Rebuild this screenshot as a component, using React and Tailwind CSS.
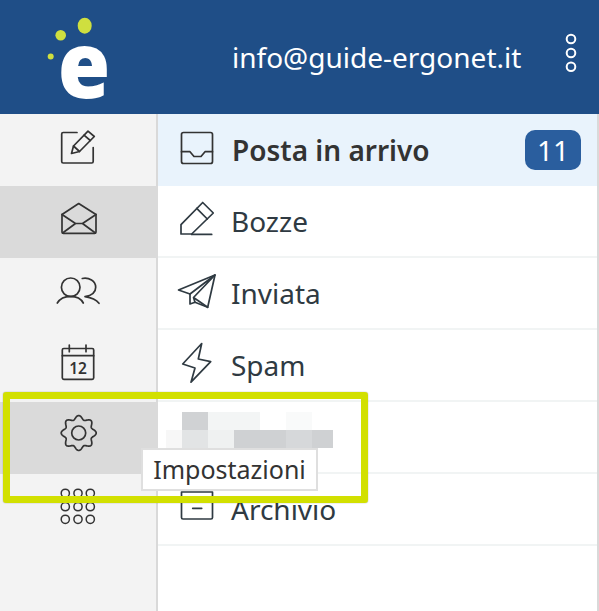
const gearPath = (() => {
  const pts = [];
  for (let i = 0; i < 240; i++) {
    const t = (i / 240) * Math.PI * 2 + Math.PI / 8;
    const r = 15.6 + 1.9 * Math.cos(8 * t);
    pts.push(`${(19.7 + r * Math.cos(t)).toFixed(2)} ${(15 + r * Math.sin(t)).toFixed(2)}`);
  }
  return 'M' + pts.join('L') + 'Z';
})();

const Icon = ({ children, color = '#333' }) => (
  <svg width="40" height="40" viewBox="0 0 40 40" fill="none" stroke={color} strokeWidth="1.7" strokeLinecap="round" strokeLinejoin="round" className="overflow-visible shrink-0">
    {children}
  </svg>
);

const Compose = () => (
  <Icon>
    <path d="M19 2.5H5.2a1.5 1.5 0 0 0-1.5 1.5v27.5a1.5 1.5 0 0 0 1.5 1.5h28.5a1.5 1.5 0 0 0 1.5-1.5V17.5" />
    <path d="M13.5 23.5l2-7.5L30 1.2l6.3 5.3L21.5 21.5z" />
    <path d="M26 5.2l6.3 5.3M15.5 16l6 5.5" />
  </Icon>
);
const MailOpen = () => (
  <Icon>
    <path d="M3 12.5L19.7 1.5L37 12.5V30a1.3 1.3 0 0 1-1.3 1.3H4.3A1.3 1.3 0 0 1 3 30z" />
    <path d="M3 12.5L16.5 21.5H23.5L37 12.5M3.6 31L16.5 21.5M36.4 31L23.5 21.5" />
  </Icon>
);
const Users = () => (
  <Icon>
    <circle cx="12.7" cy="13.3" r="9.3" />
    <path d="M-0.7 29C2 24.5 6 22.3 12.5 22.3S23 24.5 25.3 29" />
    <path d="M24.3 4.5C31 3.2 37.7 7 37.7 13.3C37.7 18 34 21.5 27 22.7C32.5 23.5 38 25.5 41 29.3" />
  </Icon>
);
const Calendar = () => (
  <Icon>
    <rect x="4.3" y="2.5" width="31.4" height="30.8" rx="1.5" />
    <path d="M4.3 9.7H35.7M11.3 -1V5.7M28 -1V5.7" />
    <text x="20" y="27.5" textAnchor="middle" fontFamily="'Noto Sans', sans-serif" fontWeight="600" fontSize="15.5" fill="#333" stroke="none">12</text>
  </Icon>
);
const Gear = () => (
  <Icon>
    <path d={gearPath} />
    <circle cx="19.7" cy="15" r="7" />
  </Icon>
);
const Apps = () => (
  <Icon>
    {[7.3, 20, 32.3].map((x) =>
      [3.3, 16.7, 29.3].map((y) => <circle key={`${x}-${y}`} cx={x} cy={y} r="4.1" strokeWidth="1.5" />)
    )}
  </Icon>
);
const Inbox = () => (
  <Icon>
    <rect x="3.5" y="2.5" width="31" height="31" rx="2" />
    <path d="M3.5 21.7H12L16 26.5H23L27 21.7H34.5" />
  </Icon>
);
const Draft = () => (
  <Icon color="#2f3a42">
    <path d="M13.7 33H3V23.7L24.7 1.5L35.3 12z" />
    <path d="M18.7 7.3L29.3 18M13.7 33.4H33.7" />
  </Icon>
);
const Send = () => (
  <Icon color="#2f3a42">
    <path d="M37 2L0.5 17L12 21V31L17 29.3L29.7 34.3z" />
    <path d="M37 2L12 21M37 2L15.5 24.5L29.7 34.3M15.5 24.5L17 29.3" />
  </Icon>
);
const Bolt = () => (
  <Icon color="#2f3a42">
    <path d="M23.7 -1.5L4.7 19L17 23L13 37.2L32.7 16.7L20.3 14z" />
  </Icon>
);
const Archive = () => (
  <Icon color="#2f3a42">
    <path d="M3.5 3H34.5V28.5a1.5 1.5 0 0 1-1.5 1.5H5a1.5 1.5 0 0 1-1.5-1.5z" />
    <path d="M14.7 19.3H23.7" />
  </Icon>
);

const railItems = [
  { key: 'c', icon: <Compose /> },
  { key: 'm', icon: <MailOpen />, active: true },
  { key: 'u', icon: <Users /> },
  { key: 'k', icon: <Calendar /> },
  { key: 'g', icon: <Gear />, active: true },
  { key: 'a', icon: <Apps /> },
];

const Row = ({ icon, label }) => (
  <div className="h-[72px] flex items-center pl-[20px] border-b-2 border-[#f1f4f4] text-[#2f3a42]">
    {icon}
    <span className="ml-[13px] text-[28px] leading-none">{label}</span>
  </div>
);

const mosaic = [
  ['#ffffff', '#d0d2d4', '#f3f5f5', '#f3f5f5', '#ffffff', '#f9fafa', '#ffffff'],
  ['#f7f7f7', '#e2e4e5', '#eff1f1', '#cfd1d3', '#cfd1d3', '#d6d8da', '#cfd1d3'],
];

export default function App() {
  return (
    <div className="relative w-[599px] h-[611px] overflow-hidden bg-white font-['Noto_Sans',sans-serif]">
      <header className="h-[114px] bg-[#1f4e87] flex items-center">
        <svg width="120" height="114" viewBox="0 0 120 114" className="shrink-0 overflow-visible">
          <ellipse cx="84.7" cy="25.7" rx="7" ry="8" fill="#cfdf3f" />
          <circle cx="60.7" cy="35.3" r="5.3" fill="#cfdf3f" />
          <circle cx="50.7" cy="56.5" r="3" fill="#cfdf3f" />
          <text x="0" y="0" textAnchor="middle" transform="translate(84 98.3) scale(0.93 1)" fontFamily="'Open Sans', sans-serif" fontWeight="800" fontSize="91.5" fill="#fff">e</text>
        </svg>
        <span className="ml-[112px] text-[28px] leading-none text-white -mt-[1px] whitespace-nowrap">info@guide-ergonet.it</span>
        <svg width="16" height="44" viewBox="0 0 16 44" fill="none" stroke="#fff" strokeWidth="2" className="ml-[42px] -mt-[8px] shrink-0">
          <circle cx="8" cy="8" r="4.3" />
          <circle cx="8" cy="22" r="4.3" />
          <circle cx="8" cy="35.7" r="4.3" />
        </svg>
      </header>
      <div className="flex h-[497px]">
        <nav className="w-[158px] shrink-0 bg-[#f3f3f3] border-r-2 border-[#d9d9d9] flex flex-col">
          {railItems.map((it) => (
            <div key={it.key} className={`h-[72px] flex items-center justify-center shrink-0 ${it.active ? 'bg-[#dadada] w-[158px]' : ''}`}>
              {it.icon}
            </div>
          ))}
        </nav>
        <main className="flex-1 border-r-2 border-[#d9d9d9]">
          <div className="h-[72px] flex items-center pl-[20px] pr-[16px] bg-[#e9f3fc]">
            <Inbox />
            <span className="ml-[14px] text-[28px] leading-none font-semibold text-[#333]">Posta in arrivo</span>
            <span className="ml-auto w-[56px] h-[40px] -mt-[1px] rounded-[10px] bg-[#2a5e9e] text-white text-[28px] leading-none flex items-center justify-center">11</span>
          </div>
          <Row icon={<Draft />} label="Bozze" />
          <Row icon={<Send />} label="Inviata" />
          <Row icon={<Bolt />} label="Spam" />
          <div className="h-[72px] border-b-2 border-[#f1f4f4] pt-[10px] pl-[8px]">
            {mosaic.map((row, r) => (
              <div key={r} className="flex h-[18px]">
                {row.map((c, i) => (
                  <div key={i} className={`h-full ${i === 0 ? 'w-[16px]' : i === 6 ? 'w-[21px]' : 'w-[26px]'}`} style={{ backgroundColor: c }} />
                ))}
              </div>
            ))}
          </div>
          <Row icon={<Archive />} label="Archivio" />
        </main>
      </div>
      <div className="absolute left-[141px] top-[448px] w-[177px] h-[43px] bg-white border-2 border-[#dfdfdf] flex items-center justify-center text-[25px] leading-none text-[#333] z-10">
        Impostazioni
      </div>
      <div className="absolute left-[3px] top-[392px] w-[365px] h-[111px] border-[7px] border-[#d2e000] rounded-[3px] shadow-[0_0_1px_rgba(0,0,0,0.6)] z-20" />
    </div>
  );
}
